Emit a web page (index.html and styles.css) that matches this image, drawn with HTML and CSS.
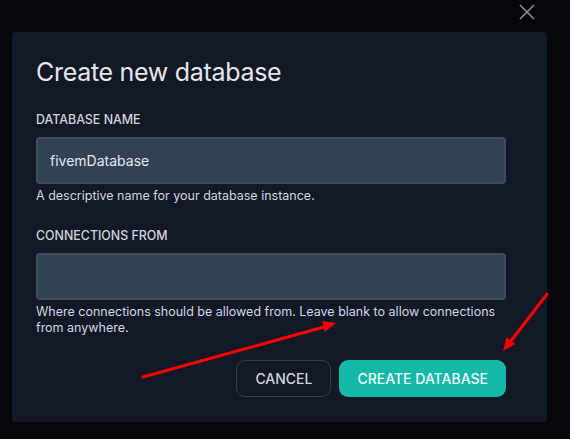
FILE: index.html
```html
<!DOCTYPE html>
<html lang="en">
<head>
<meta charset="utf-8">
<title>Create new database</title>
<link rel="stylesheet" href="styles.css">
</head>
<body>
<div class="page">
  <button class="close" aria-label="Close">
    <svg width="16" height="16" viewBox="0 0 16 16"><path d="M1 1 L15 15 M15 1 L1 15" stroke="#8b8f97" stroke-width="1.6" fill="none"/></svg>
  </button>
  <div class="modal">
    <h2 class="title">Create new database</h2>
    <div class="field">
      <label class="label">Database name</label>
      <div class="input">fivemDatabase</div>
      <p class="help">A descriptive name for your database instance.</p>
    </div>
    <div class="field">
      <label class="label">Connections from</label>
      <div class="input"></div>
      <p class="help">Where connections should be allowed from. Leave blank to allow connections from anywhere.</p>
    </div>
    <div class="actions">
      <button class="btn btn-cancel">Cancel</button>
      <button class="btn btn-primary">Create database</button>
    </div>
  </div>
  <svg class="arrows" width="570" height="439" viewBox="0 0 570 439">
    <line x1="143" y1="377" x2="324" y2="327" stroke="#ff0000" stroke-width="3" stroke-linecap="round"/>
    <polygon points="336,323 324.8,331.8 322.1,321.2" fill="#ff0000"/>
    <line x1="547" y1="294" x2="511" y2="341" stroke="#ff0000" stroke-width="3" stroke-linecap="round"/>
    <polygon points="503,351 515.3,344.1 506.5,337.3" fill="#ff0000"/>
  </svg>
</div>
</body>
</html>
```
FILE: styles.css
```css
* { box-sizing: border-box; }
html, body { margin: 0; padding: 0; }
body {
  background: #06070b;
  font-family: Inter, "Liberation Sans", sans-serif;
  width: 570px;
  height: 439px;
  overflow: hidden;
}
.page {
  position: relative;
  width: 570px;
  height: 439px;
  padding: 32px 23px 0 12px;
}
.close {
  position: absolute;
  left: 519px;
  top: 4px;
  width: 16px;
  height: 16px;
  padding: 0;
  border: 0;
  background: none;
  display: block;
}
.close svg { display: block; }
.modal {
  background: #121826;
  border-radius: 4px;
  width: 535px;
  padding: 24px 41px 25px 24px;
}
.title {
  margin: 0 0 24px;
  font-size: 25px;
  line-height: 32px;
  font-weight: 400;
  color: #e5e7eb;
  letter-spacing: -0.3px;
}
.field { margin-bottom: 24px; }
.label {
  display: block;
  font-size: 12.4px;
  line-height: 16px;
  font-weight: 500;
  text-transform: uppercase;
  color: #d1d5db;
  margin-bottom: 9px;
}
.input {
  height: 47px;
  background: #334155;
  border: 2px solid #414d5f;
  border-radius: 4px;
  padding: 0 12px;
  font-size: 14px;
  line-height: 43px;
  color: #e2e8f0;
}
.help {
  margin: 4px 0 0;
  font-size: 12.5px;
  line-height: 16px;
  color: #d1d7e0;
}
.actions {
  display: flex;
  justify-content: flex-end;
  gap: 8px;
}
.btn {
  height: 37px;
  padding: 0 18px;
  border-radius: 9px;
  font-family: Inter, "Liberation Sans", sans-serif;
  font-size: 14px;
  font-weight: 500;
  text-transform: uppercase;
}
.btn-cancel {
  background: transparent;
  border: 1px solid #343c4b;
  color: #d1d5db;
}
.btn-primary {
  background: #14b8a6;
  border: 0;
  color: #f0fdfa;
}
.arrows {
  position: absolute;
  left: 0;
  top: 0;
  pointer-events: none;
}
```
